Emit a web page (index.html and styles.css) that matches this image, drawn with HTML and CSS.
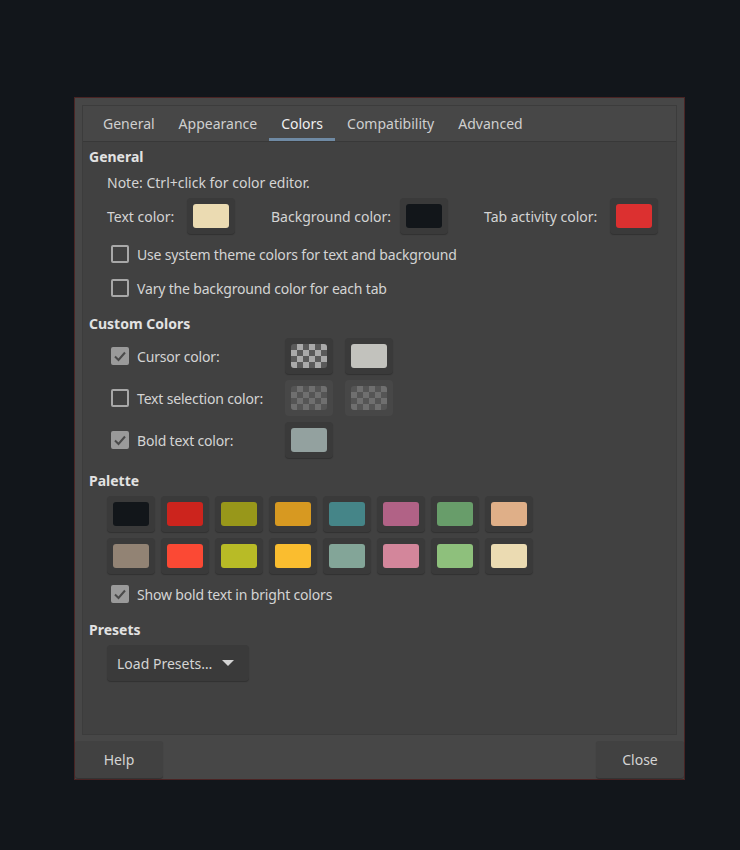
FILE: index.html
```html
<!DOCTYPE html>
<html>
<head>
<meta charset="utf-8">
<link rel="stylesheet" href="styles.css">
</head>
<body>
<div class="dialog">
  <div class="notebook">
    <div class="tabs">
      <div class="tab">General</div>
      <div class="tab">Appearance</div>
      <div class="tab active">Colors</div>
      <div class="tab">Compatibility</div>
      <div class="tab">Advanced</div>
    </div>
    <div class="page">
      <div class="heading">General</div>
      <div class="note">Note: Ctrl+click for color editor.</div>
      <div class="color-row">
        <span class="lbl lbl-text">Text color:</span>
        <span class="cbtn"><span class="sw" style="background:#ebdbb2"></span></span>
        <span class="lbl lbl-bg">Background color:</span>
        <span class="cbtn"><span class="sw" style="background:#12161a"></span></span>
        <span class="lbl lbl-tab">Tab activity color:</span>
        <span class="cbtn"><span class="sw" style="background:#dc3030"></span></span>
      </div>
      <div class="check-row"><span class="cb"></span><span class="cl">Use system theme colors for text and background</span></div>
      <div class="check-row"><span class="cb"></span><span class="cl">Vary the background color for each tab</span></div>

      <div class="heading h-custom">Custom Colors</div>
      <div class="custom-grid">
        <div class="check-cell"><span class="cb checked"><svg viewBox="0 0 18 18" width="18" height="18"><path d="M4 9.5 L7.5 13 L14 5.5" fill="none" stroke="#4a4a4a" stroke-width="2"/></svg></span><span class="cl">Cursor color:</span></div>
        <span class="cbtn"><span class="sw checker"></span></span>
        <span class="cbtn"><span class="sw" style="background:#c2c2bd"></span></span>

        <div class="check-cell"><span class="cb"></span><span class="cl">Text selection color:</span></div>
        <span class="cbtn disabled"><span class="sw checker dim"></span></span>
        <span class="cbtn disabled"><span class="sw checker dim"></span></span>

        <div class="check-cell"><span class="cb checked"><svg viewBox="0 0 18 18" width="18" height="18"><path d="M4 9.5 L7.5 13 L14 5.5" fill="none" stroke="#4a4a4a" stroke-width="2"/></svg></span><span class="cl">Bold text color:</span></div>
        <span class="cbtn"><span class="sw" style="background:#93a19f"></span></span>
        <span></span>
      </div>

      <div class="heading h-palette">Palette</div>
      <div class="palette">
        <span class="cbtn"><span class="sw" style="background:#12161a"></span></span>
        <span class="cbtn"><span class="sw" style="background:#cc241d"></span></span>
        <span class="cbtn"><span class="sw" style="background:#98971a"></span></span>
        <span class="cbtn"><span class="sw" style="background:#d79921"></span></span>
        <span class="cbtn"><span class="sw" style="background:#458588"></span></span>
        <span class="cbtn"><span class="sw" style="background:#b16286"></span></span>
        <span class="cbtn"><span class="sw" style="background:#689d6a"></span></span>
        <span class="cbtn"><span class="sw" style="background:#dfaf88"></span></span>
        <span class="cbtn"><span class="sw" style="background:#928374"></span></span>
        <span class="cbtn"><span class="sw" style="background:#fb4934"></span></span>
        <span class="cbtn"><span class="sw" style="background:#b8bb26"></span></span>
        <span class="cbtn"><span class="sw" style="background:#fabd2f"></span></span>
        <span class="cbtn"><span class="sw" style="background:#83a598"></span></span>
        <span class="cbtn"><span class="sw" style="background:#d3869b"></span></span>
        <span class="cbtn"><span class="sw" style="background:#8ec07c"></span></span>
        <span class="cbtn"><span class="sw" style="background:#ebdbb2"></span></span>
      </div>
      <div class="check-row"><span class="cb checked"><svg viewBox="0 0 18 18" width="18" height="18"><path d="M4 9.5 L7.5 13 L14 5.5" fill="none" stroke="#4a4a4a" stroke-width="2"/></svg></span><span class="cl">Show bold text in bright colors</span></div>

      <div class="heading h-presets">Presets</div>
      <div class="presets-row">
        <div class="dropdown">Load Presets… <svg class="arrow" viewBox="0 0 12 8" width="12" height="8"><path d="M0 1 L12 1 L6 7 Z" fill="#d4d4d4"/></svg></div>
      </div>
    </div>
  </div>
  <div class="actions">
    <div class="btn">Help</div>
    <div class="btn">Close</div>
  </div>
</div>
</body>
</html>
```
FILE: styles.css
```css
html, body {
  margin: 0;
  padding: 0;
  background: #12161b;
  width: 740px;
  height: 850px;
  font-family: "Noto Sans", "Open Sans", sans-serif;
  font-size: 14px;
  color: #d4d4d4;
}
.dialog {
  margin: 97px 0 0 74px;
  width: 609px;
  height: 681px;
  background: #474747;
  border: 1px solid #4a2424;
  display: flex;
  flex-direction: column;
}
.notebook {
  margin: 7px 7px 0 7px;
  height: 628px;
  border: 1px solid #3c3c3c;
  background: #414141;
  display: flex;
  flex-direction: column;
}
.tabs {
  display: flex;
  height: 35px;
  background: #474747;
  border-bottom: 1px solid #383838;
  padding-left: 8px;
  flex-shrink: 0;
}
.tab {
  padding: 0 12px;
  line-height: 36px;
  color: #cfcfcf;
  border-bottom: 3px solid transparent;
  height: 32px;
}
.tab.active {
  color: #f0f0f0;
  border-bottom-color: #6f8aa4;
}
.page {
  padding: 5px 6px 0 6px;
  display: flex;
  flex-direction: column;
}
.heading {
  font-weight: bold;
  line-height: 20px;
  color: #e2e2e2;
}
.note {
  margin: 6px 0 0 18px;
  line-height: 20px;
}
.color-row {
  display: flex;
  align-items: center;
  margin: 5px 0 0 18px;
}
.lbl-text { width: 80px; }
.lbl-bg { margin-left: 36px; width: 129px; }
.lbl-tab { margin-left: 36px; width: 126px; }
.cbtn {
  display: flex;
  width: 48px;
  height: 36px;
  box-sizing: border-box;
  padding: 6px;
  background: #3a3a3a;
  border-radius: 4px;
  box-shadow: 0 1px 1px rgba(0,0,0,0.25);
}
.cbtn.disabled {
  background: #474747;
  box-shadow: none;
}
.sw {
  flex: 1;
  border-radius: 3px;
}
.checker {
  background-color: #5a5a5a;
  background-image:
    linear-gradient(45deg, #a9a9a9 25%, transparent 25%, transparent 75%, #a9a9a9 75%),
    linear-gradient(45deg, #a9a9a9 25%, transparent 25%, transparent 75%, #a9a9a9 75%);
  background-size: 12px 12px;
  background-position: 0 0, 6px 6px;
}
.checker.dim {
  background-color: #555555;
  background-image:
    linear-gradient(45deg, #6f6f6f 25%, transparent 25%, transparent 75%, #6f6f6f 75%),
    linear-gradient(45deg, #6f6f6f 25%, transparent 25%, transparent 75%, #6f6f6f 75%);
}
.check-row {
  display: flex;
  align-items: center;
  height: 34px;
  margin-left: 22px;
}
.color-row + .check-row { margin-top: 3px; }
.cb {
  width: 18px;
  height: 18px;
  box-sizing: border-box;
  border: 2px solid #a8a8a8;
  border-radius: 2px;
  flex-shrink: 0;
  display: flex;
}
.cb.checked {
  background: #9a9a9a;
  border-color: #9a9a9a;
}
.cb svg { margin: -2px; }
.cl { margin-left: 8px; letter-spacing: -0.17px; }
.h-custom { margin-top: 9px; }
.custom-grid {
  display: grid;
  grid-template-columns: 162px 48px 48px;
  column-gap: 12px;
  row-gap: 6px;
  margin: 4px 0 0 22px;
  align-items: center;
}
.check-cell {
  display: flex;
  align-items: center;
}
.h-palette { margin-top: 13px; }
.palette {
  display: grid;
  grid-template-columns: repeat(8, 48px);
  gap: 6px;
  margin: 5px 0 0 18px;
}
.palette + .check-row { margin-top: 3px; }
.h-presets { margin-top: 9px; }
.presets-row {
  display: flex;
  margin: 5px 0 0 18px;
}
.dropdown {
  height: 36px;
  width: 142px;
  box-sizing: border-box;
  padding-left: 10px;
  display: flex;
  align-items: center;
  background: #3a3a3a;
  border-radius: 4px;
  box-shadow: 0 1px 1px rgba(0,0,0,0.25);
}
.arrow { margin-left: 10px; }
.actions {
  display: flex;
  justify-content: space-between;
  margin-top: 6px;
}
.btn {
  width: 88px;
  height: 37px;
  line-height: 37px;
  text-align: center;
  background: #414141;
  border-radius: 3px;
  box-shadow: 0 1px 1px rgba(0,0,0,0.3);
}
```
